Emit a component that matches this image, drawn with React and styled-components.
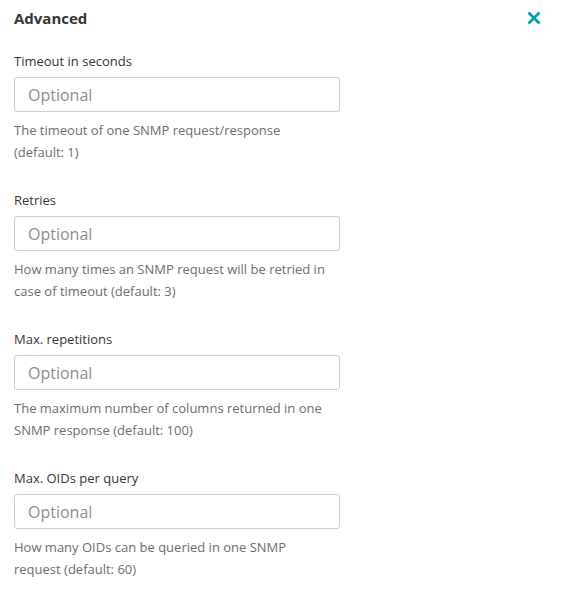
import React from 'react'
import styled, { createGlobalStyle } from 'styled-components'

const GlobalStyle = createGlobalStyle`
  html, body {
    margin: 0;
    padding: 0;
    background: #ffffff;
  }
  body {
    font-family: 'Open Sans', 'Liberation Sans', sans-serif;
    color: #353535;
  }
`

const Panel = styled.div`
  width: 578px;
  padding: 8px 14px 0;
  box-sizing: border-box;
`

const Header = styled.div`
  display: flex;
  align-items: center;
  justify-content: space-between;
  width: 528px;
  height: 20px;
  margin-bottom: 23px;
`

const Title = styled.h2`
  margin: 0;
  font-size: 15px;
  font-weight: 700;
  line-height: 20px;
  color: #353535;
`

const CloseButton = styled.button`
  border: 0;
  background: transparent;
  padding: 0;
  width: 16px;
  height: 16px;
  display: flex;
  align-items: center;
  justify-content: center;
  cursor: pointer;
`

const FieldList = styled.div`
  display: flex;
  flex-direction: column;
  gap: 27px;
`

const Field = styled.div`
  display: flex;
  flex-direction: column;
  width: 326px;
`

const Label = styled.label`
  font-size: 13px;
  line-height: 20px;
  margin-bottom: 6px;
  color: #353535;
`

const Input = styled.input`
  box-sizing: border-box;
  width: 326px;
  height: 35px;
  border: 1px solid #cccccc;
  border-radius: 3px;
  padding: 0 13px;
  font-family: inherit;
  font-size: 16px;
  color: #353535;
  outline: none;

  &::placeholder {
    color: #8e8e8e;
  }
`

const Help = styled.p`
  margin: 7px 0 0;
  max-width: 318px;
  font-size: 13px;
  line-height: 22px;
  color: #6d6d6d;
`

const fields = [
  { label: 'Timeout in seconds', help: 'The timeout of one SNMP request/response (default: 1)' },
  { label: 'Retries', help: 'How many times an SNMP request will be retried in case of timeout (default: 3)' },
  { label: 'Max. repetitions', help: 'The maximum number of columns returned in one SNMP response (default: 100)' },
  { label: 'Max. OIDs per query', help: 'How many OIDs can be queried in one SNMP request (default: 60)' },
]

export default function App() {
  return (
    <>
      <GlobalStyle />
      <Panel>
        <Header>
          <Title>Advanced</Title>
          <CloseButton aria-label="Close">
            <svg width="14" height="14" viewBox="0 0 14 14">
              <path d="M1.5 1.5 L12.5 12.5 M12.5 1.5 L1.5 12.5" stroke="#00a1b2" strokeWidth="2.8" strokeLinecap="butt" />
            </svg>
          </CloseButton>
        </Header>
        <FieldList>
          {fields.map((f) => (
            <Field key={f.label}>
              <Label>{f.label}</Label>
              <Input placeholder="Optional" />
              <Help>{f.help}</Help>
            </Field>
          ))}
        </FieldList>
      </Panel>
    </>
  )
}
